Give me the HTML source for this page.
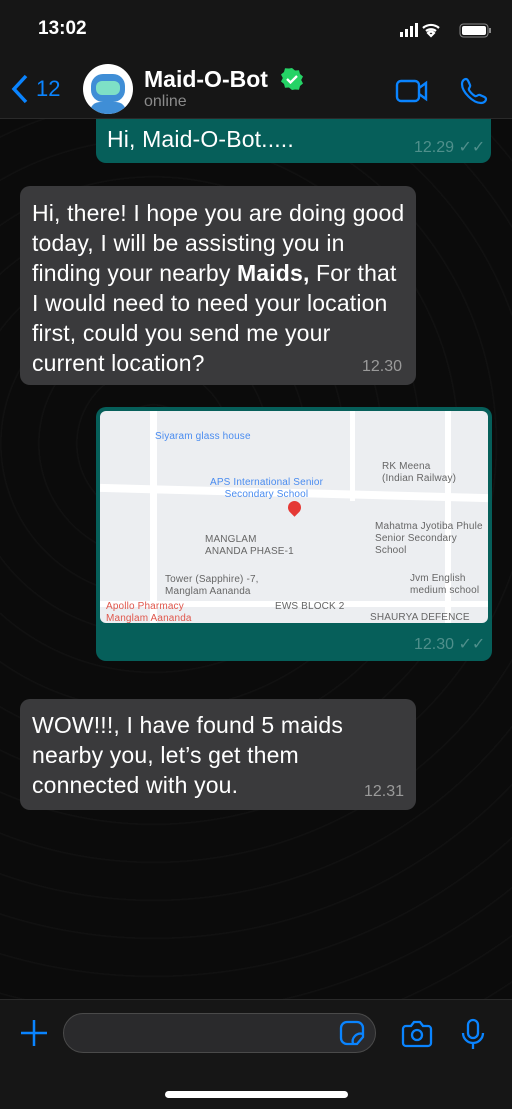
<!DOCTYPE html><html><head><style>
*{margin:0;padding:0;box-sizing:border-box}
body{width:512px;height:1109px;background:#0b0b0b;font-family:"Liberation Sans",sans-serif;color:#fff;position:relative;overflow:hidden}
.abs{position:absolute}
.hdr{left:0;top:0;width:512px;height:119px;background:#161616;border-bottom:1px solid #2a2a2a}
.b{position:absolute;border-radius:10px;font-size:23px;line-height:30px;letter-spacing:.15px}
.in{background:#3a3a3c}
.out{background:#065f5a}
.t{position:absolute;font-size:16px;color:#9a9a9a}
.ot{color:#4f8f8b}
.map{position:absolute;left:4px;top:4px;width:388px;height:212px;background:#eceef1;border-radius:6px;overflow:hidden}
.road{position:absolute;background:#fff}
.lbl{position:absolute;font-size:10px;color:#666;line-height:12px}
</style></head><body>
<div class="abs" style="left:0;top:0;width:512px;height:1109px;opacity:.025;background:repeating-radial-gradient(circle at 30% 40%,#fff 0 1px,transparent 2px 38px)"></div>
<div class="abs hdr"></div>
<div class="abs" style="left:38px;top:18px;font-size:19px;font-weight:bold">13:02</div>
<svg class="abs" style="left:400px;top:22px" width="92" height="18"><rect x="0" y="10" width="3" height="5" fill="#fff"/><rect x="5" y="7" width="3" height="8" fill="#fff"/><rect x="10" y="4" width="3" height="11" fill="#fff"/><rect x="15" y="1" width="3" height="14" fill="#fff"/><path d="M31 14l3-3a4 4 0 0 0-6 0zM26 9a8 8 0 0 1 10 0M23 6a12 12 0 0 1 16 0" stroke="#fff" stroke-width="2.2" fill="none"/><rect x="60" y="2" width="28" height="13" rx="3.5" stroke="#888" fill="none"/><rect x="62" y="4" width="24" height="9" rx="2" fill="#fff"/><rect x="89" y="6" width="2" height="5" fill="#888"/></svg>
<svg class="abs" style="left:10px;top:74px" width="20" height="30"><path d="M16 2L4 15l12 13" stroke="#0a84ff" stroke-width="3.5" fill="none"/></svg>
<div class="abs" style="left:36px;top:76px;font-size:22px;color:#0a84ff">12</div>
<div class="abs" style="left:83px;top:64px;width:50px;height:50px;border-radius:50%;background:#fff;overflow:hidden"><div class="abs" style="left:8px;top:10px;width:34px;height:28px;border-radius:12px;background:#3f8ed6"></div><div class="abs" style="left:13px;top:17px;width:24px;height:14px;border-radius:6px;background:#7ee0c6"></div><div class="abs" style="left:7px;top:38px;width:36px;height:16px;border-radius:10px 10px 0 0;background:#3f8ed6"></div></div>
<div class="abs" style="left:144px;top:66px;font-size:23px;font-weight:bold">Maid-O-Bot</div>
<svg class="abs" style="left:280px;top:67px" width="24" height="24"><path d="M12 1l3 2.5 4-.3 1 3.8 3 2.5-1.8 3.5 1.8 3.5-3 2.5-1 3.8-4-.3L12 23l-3-2.5-4 .3-1-3.8-3-2.5L2.8 11 1 7.5 4 5l1-3.8 4 .3z" fill="#25d366"/><path d="M7 12l3.5 3.5L17 9" stroke="#fff" stroke-width="2.3" fill="none"/></svg>
<div class="abs" style="left:144px;top:93px;font-size:16px;color:#8a8a8a">online</div>
<svg class="abs" style="left:395px;top:78px" width="34" height="26"><rect x="2" y="3" width="22" height="20" rx="4" stroke="#0a84ff" stroke-width="2.4" fill="none"/><path d="M24 10l7-5v16l-7-5" stroke="#0a84ff" stroke-width="2.4" fill="none"/></svg>
<svg class="abs" style="left:459px;top:76px" width="30" height="30"><path d="M7 3c2 0 3 4 4 6s-2 3-1 5 4 5 6 6 3-2 5-1 6 2 6 4-2 4-5 4C14 27 3 16 3 8c0-3 2-5 4-5z" stroke="#0a84ff" stroke-width="2.2" fill="none"/></svg>

<div class="b out" style="left:96px;top:119px;width:395px;height:44px;border-radius:0 0 10px 10px;padding:7px 11px;line-height:26px">Hi, Maid-O-Bot.....</div>
<div class="t ot" style="left:414px;top:137px">12.29 ✓✓</div>
<div class="b in" style="left:20px;top:186px;width:396px;height:199px;padding:12px 8px 12px 12px">Hi, there! I hope you are doing good today, I will be assisting you in finding your nearby <b>Maids,</b> For that I would need to need your location first, could you send me your current location?</div>
<div class="t" style="left:362px;top:358px">12.30</div>
<div class="b out" style="left:96px;top:407px;width:396px;height:254px"><div class="map">
<div class="road" style="left:0;top:78px;width:388px;height:8px;transform:rotate(1.5deg)"></div>
<div class="road" style="left:50px;top:0;width:7px;height:212px"></div>
<div class="road" style="left:345px;top:0;width:6px;height:212px"></div>
<div class="road" style="left:250px;top:0;width:5px;height:90px"></div>
<div class="road" style="left:0;top:190px;width:388px;height:6px"></div>
<div class="abs" style="left:188px;top:90px;width:13px;height:13px;border-radius:50% 50% 50% 0;transform:rotate(-45deg);background:#e53935"></div>
<div class="lbl" style="left:55px;top:20px;color:#4a8cf0">Siyaram glass house</div>
<div class="lbl" style="left:110px;top:66px;color:#4a8cf0">APS International Senior<br>&nbsp;&nbsp;&nbsp;&nbsp;&nbsp;Secondary School</div>
<div class="lbl" style="left:282px;top:50px">RK Meena<br>(Indian Railway)</div>
<div class="lbl" style="left:105px;top:123px">MANGLAM<br>ANANDA PHASE-1</div>
<div class="lbl" style="left:275px;top:110px">Mahatma Jyotiba Phule<br>Senior Secondary School</div>
<div class="lbl" style="left:65px;top:163px">Tower (Sapphire) -7,<br>Manglam Aananda</div>
<div class="lbl" style="left:6px;top:190px;color:#e0574c">Apollo Pharmacy<br>Manglam Aananda</div>
<div class="lbl" style="left:175px;top:190px">EWS BLOCK 2</div>
<div class="lbl" style="left:310px;top:162px">Jvm English<br>medium school</div>
<div class="lbl" style="left:270px;top:201px">SHAURYA DEFENCE</div>
</div></div>
<div class="t ot" style="left:414px;top:634px">12.30 ✓✓</div>
<div class="b in" style="left:20px;top:699px;width:396px;height:111px;padding:11px 12px">WOW!!!, I have found 5 maids nearby you, let’s get them connected with you.</div>
<div class="t" style="left:364px;top:783px">12.31</div>

<div class="abs" style="left:0;top:999px;width:512px;height:110px;background:#161616;border-top:1px solid #2a2a2a"></div>
<svg class="abs" style="left:20px;top:1019px" width="28" height="28"><path d="M14 1v26M1 14h26" stroke="#0a84ff" stroke-width="2.5"/></svg>
<div class="abs" style="left:63px;top:1013px;width:313px;height:40px;border-radius:20px;background:#2a2a2c;border:1px solid #4a4a4a"></div>
<svg class="abs" style="left:339px;top:1020px" width="26" height="26"><path d="M18 24H8a6 6 0 0 1-6-6V8a6 6 0 0 1 6-6h10a6 6 0 0 1 6 6v9zM14 24a8 8 0 0 1 10-10" stroke="#0a84ff" stroke-width="2.3" fill="none"/></svg>
<svg class="abs" style="left:401px;top:1020px" width="32" height="28"><path d="M5 6h5l3-4h6l3 4h5a3 3 0 0 1 3 3v14a3 3 0 0 1-3 3H5a3 3 0 0 1-3-3V9a3 3 0 0 1 3-3z" stroke="#0a84ff" stroke-width="2.3" fill="none"/><circle cx="16" cy="15" r="5" stroke="#0a84ff" stroke-width="2.3" fill="none"/></svg>
<svg class="abs" style="left:460px;top:1018px" width="26" height="32"><rect x="8" y="2" width="10" height="18" rx="5" stroke="#0a84ff" stroke-width="2.3" fill="none"/><path d="M3 15a10 10 0 0 0 20 0M13 25v6" stroke="#0a84ff" stroke-width="2.3" fill="none"/></svg>
<div class="abs" style="left:165px;top:1091px;width:183px;height:7px;border-radius:4px;background:#fff"></div>
</body></html>
